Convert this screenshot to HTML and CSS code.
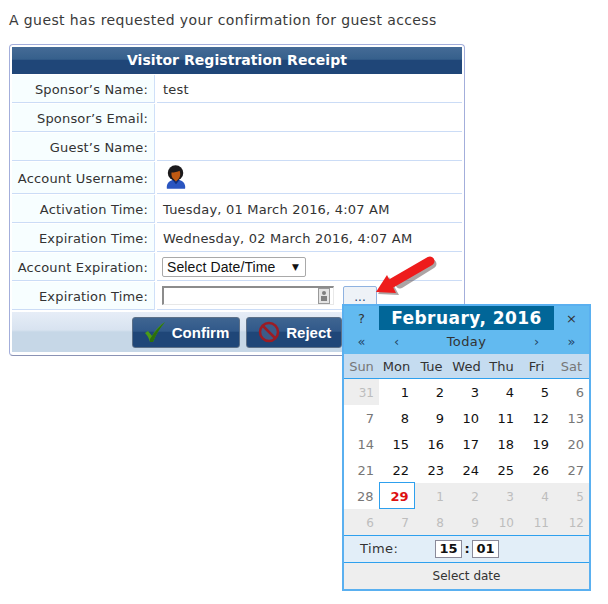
FILE: index.html
```html
<!DOCTYPE html>
<html lang="en">
<head>
    <meta charset="UTF-8">
    <link rel="stylesheet" href="styles.css">
    <title>Visitor Registration Receipt</title>
</head>
<body>
    <div class="page">
        <p class="intro">A guest has requested your confirmation for guest access</p>
        <div class="card">
            <div class="card-title">Visitor Registration Receipt</div>
            <div class="row"><label class="row-label">Sponsor’s Name:</label><div class="row-value">test</div></div>
            <div class="row"><label class="row-label">Sponsor’s Email:</label><div class="row-value"></div></div>
            <div class="row"><label class="row-label">Guest’s Name:</label><div class="row-value"></div></div>
            <div class="row row-tall">
                <label class="row-label">Account Username:</label>
                <div class="row-value">
                    <svg class="avatar" width="20" height="26" viewBox="0 0 22 26">
                        <path d="M1 26c-1-6 3-9 7-10h6c4 1 8 4 7 10z" fill="#2a55c0"/>
                        <path d="M7 16l4 5 4-5z" fill="#12307c"/>
                        <ellipse cx="10.500" cy="8.500" rx="8.500" ry="8.500" fill="#1c1a1c"/>
                        <path d="M6 8c3 0 7-1 9-2 1 3 1 6-1 9l-3 3-3-3c-2-2-2-4-2-7z" fill="#bf5a12"/>
                    </svg>
                </div>
            </div>
            <div class="row"><label class="row-label">Activation Time:</label><div class="row-value">Tuesday, 01 March 2016, 4:07 AM</div></div>
            <div class="row"><label class="row-label">Expiration Time:</label><div class="row-value">Wednesday, 02 March 2016, 4:07 AM</div></div>
            <div class="row">
                <label class="row-label">Account Expiration:</label>
                <div class="row-value row-control">
                    <div class="select-box">Select Date/Time<span class="select-arrow">▼</span></div>
                </div>
            </div>
            <div class="row">
                <label class="row-label">Expiration Time:</label>
                <div class="row-value row-control row-picker">
                    <div class="date-input">
                        <svg class="date-icon" width="12" height="16" viewBox="0 0 12 16">
                            <rect x="0.500" y="0.500" width="11" height="15" fill="#e4e4e4" stroke="#9a9a9a"/>
                            <circle cx="6" cy="5" r="2" fill="#808080"/>
                            <rect x="3" y="8" width="6" height="5" fill="#808080"/>
                        </svg>
                    </div>
                    <button class="pick-btn">...</button>
                </div>
            </div>
            <div class="card-footer">
                <button class="action-btn">
                    <svg width="24" height="22" viewBox="0 0 24 22">
                        <path d="M2 12l3-2 4 5C12 9 17 4 22 1 17 7 13 13 10 21H7C6 17 4 14 2 12z" fill="#4a9a18"/>
                        <path d="M7 18C12 10 17 5 22 1 17 7 13 13 10 21H7z" fill="#2c6f0c"/>
                    </svg>
                    Confirm
                </button>
                <button class="action-btn">
                    <svg width="24" height="24" viewBox="0 0 24 24">
                        <circle cx="12" cy="12" r="9" fill="#3c5c88" stroke="#9c1c24" stroke-width="2.500"/>
                        <path d="M5.500 5.500l13 13" stroke="#9c1c24" stroke-width="2.500"/>
                    </svg>
                    Reject
                </button>
            </div>
        </div>

        <svg class="arrow" width="66" height="46" viewBox="0 0 66 46">
            <path d="M54 8L22 28" stroke="#5a4a4a" stroke-opacity="0.500" stroke-width="9" stroke-linecap="round" transform="translate(2 2)"/>
            <path d="M0 38L11 21 21 39z" fill="#5a4a4a" fill-opacity="0.500" transform="translate(2 2)"/>
            <path d="M54 7L16 29" stroke="#ee1c1c" stroke-width="9" stroke-linecap="round"/>
            <path d="M0 38L11 21 20 39z" fill="#ee1c1c"/>
        </svg>

        <div class="calendar">
            <div class="cal-title">
                <span class="cal-side">?</span>
                <span class="cal-month">February, 2016</span>
                <span class="cal-side">×</span>
            </div>
            <div class="cal-nav">
                <span>«</span><span>‹</span><span class="cal-today">Today</span><span>›</span><span>»</span>
            </div>
            <table class="cal-grid">
                <thead>
                    <tr><th class="weekend">Sun</th><th>Mon</th><th>Tue</th><th>Wed</th><th>Thu</th><th>Fri</th><th class="weekend">Sat</th></tr>
                </thead>
                <tbody>
                    <tr><td class="other">31</td><td>1</td><td>2</td><td>3</td><td>4</td><td>5</td><td class="weekend">6</td></tr>
                    <tr><td class="weekend">7</td><td>8</td><td>9</td><td>10</td><td>11</td><td>12</td><td class="weekend">13</td></tr>
                    <tr><td class="weekend">14</td><td>15</td><td>16</td><td>17</td><td>18</td><td>19</td><td class="weekend">20</td></tr>
                    <tr><td class="weekend">21</td><td>22</td><td>23</td><td>24</td><td>25</td><td>26</td><td class="weekend">27</td></tr>
                    <tr><td class="weekend">28</td><td class="selected">29</td><td class="other">1</td><td class="other">2</td><td class="other">3</td><td class="other">4</td><td class="other">5</td></tr>
                    <tr><td class="other">6</td><td class="other">7</td><td class="other">8</td><td class="other">9</td><td class="other">10</td><td class="other">11</td><td class="other">12</td></tr>
                </tbody>
            </table>
            <div class="cal-time">
                <span class="time-label">Time:</span>
                <span class="time-box">15</span><span class="time-sep">:</span><span class="time-box">01</span>
            </div>
            <div class="cal-status">Select date</div>
        </div>
    </div>
</body>
</html>
```

FILE: styles.css
```css
body {
    margin: 0;
    padding: 0;
    background-color: #ffffff;
    font-family: "DejaVu Sans", sans-serif;
    font-size: 13px;
    color: #333333;
}
.page {
    position: relative;
    width: 608px;
    height: 604px;
    overflow: hidden;
    padding: 12px 0 0 9px;
    box-sizing: border-box;
}
.intro {
    margin: 0 0 15px 0;
    font-size: 14px;
    letter-spacing: 0.4px;
    line-height: 17px;
    color: #3a3a3a;
}

/* receipt card */
.card {
    width: 456px;
    height: 312px;
    box-sizing: border-box;
    padding: 2px;
    background-color: #ffffff;
    border: 1px solid #a3aedb;
    border-bottom-color: #8b93b5;
    border-radius: 4px;
}
.card-title {
    height: 27px;
    margin-bottom: 1px;
    background: linear-gradient(#456b96 0, #36608c 45%, #1f4678 50%, #1f4678 100%);
    color: #ffffff;
    font-weight: bold;
    font-size: 14px;
    letter-spacing: 0.05px;
    line-height: 26px;
    text-align: center;
}
.row {
    display: grid;
    grid-template-columns: 143px 305px;
    grid-template-rows: 100%;
    column-gap: 2px;
    height: 28px;
    margin-bottom: 1px;
}
.row-tall {
    height: 32px;
}
.row-label {
    display: flex;
    justify-content: flex-end;
    align-items: center;
    box-sizing: border-box;
    padding: 1px 6px 0 0;
    background-color: #f7feff;
    border-right: 1px solid #cfe0f8;
    border-bottom: 1px solid #cbdcf6;
    letter-spacing: 0.17px;
}
.row-value {
    display: flex;
    align-items: center;
    box-sizing: border-box;
    padding: 1px 0 0 6px;
    border-bottom: 1px solid #cbdcf6;
    letter-spacing: 0.2px;
}
.row-control {
    padding: 0 0 0 5px;
}
.avatar {
    margin: 0 0 2px 3px;
}
.select-box {
    display: flex;
    justify-content: space-between;
    align-items: center;
    width: 144px;
    height: 20px;
    box-sizing: border-box;
    padding: 0 6px 0 4px;
    border: 1px solid #a9a9a9;
    border-radius: 2px;
    font-family: "Liberation Sans", sans-serif;
    font-size: 14px;
    letter-spacing: 0.1px;
    color: #111111;
}
.select-arrow {
    font-family: "DejaVu Sans", sans-serif;
    font-size: 9px;
}
.row-picker {
    gap: 9px;
    align-items: flex-start;
    padding-top: 4px;
}
.date-input {
    display: flex;
    justify-content: flex-end;
    align-items: center;
    width: 172px;
    height: 19px;
    box-sizing: border-box;
    padding-right: 3px;
    border: 1px solid #e8e8e8;
    border-top: 2px solid #8c8c8c;
    border-left: 2px solid #8c8c8c;
}
.pick-btn {
    width: 34px;
    height: 22px;
    margin: 0;
    padding: 0;
    background-color: #eef2f7;
    border: 1px solid #8fb2e0;
    border-radius: 2px;
    font-family: "DejaVu Sans", sans-serif;
    font-size: 12px;
    color: #1f4678;
}
.card-footer {
    display: flex;
    justify-content: center;
    align-items: center;
    gap: 6px;
    height: 40px;
    margin-top: 2px;
    background: linear-gradient(#e6edf7 0, #d8e3f0 45%, #c6d7e7 50%, #c6d7e7 100%);
}
.action-btn {
    display: flex;
    align-items: center;
    justify-content: center;
    gap: 5px;
    height: 31px;
    padding: 0 10px;
    background: linear-gradient(#3f6591 0, #31598a 45%, #1f4678 50%, #1f4678 100%);
    border: 1px solid #5c7088;
    border-radius: 3px;
    font-family: "Liberation Sans", sans-serif;
    font-weight: bold;
    font-size: 15px;
    color: #ffffff;
}

/* red pointer over the picker button */
.arrow {
    position: absolute;
    left: 376px;
    top: 254px;
}

/* date picker popup */
.calendar {
    position: absolute;
    left: 342px;
    top: 304px;
    width: 249px;
    height: 287px;
    box-sizing: border-box;
    border: 2px solid #5ab0f0;
    background-color: #ffffff;
}
.cal-title {
    display: flex;
    height: 24px;
    background-color: #62baf0;
}
.cal-side {
    width: 35px;
    text-align: center;
    line-height: 25px;
    color: #333333;
}
.cal-month {
    width: 175px;
    background-color: #016698;
    color: #ffffff;
    font-weight: bold;
    font-size: 17px;
    letter-spacing: 0.45px;
    line-height: 25px;
    text-align: center;
}
.cal-nav {
    display: grid;
    grid-template-columns: 35px 35px 105px 35px 35px;
    height: 24px;
    background-color: #62baf0;
    line-height: 24px;
    text-align: center;
    color: #224466;
}
.cal-today {
    letter-spacing: 0.4px;
    color: #333333;
}
.cal-grid {
    width: 245px;
    table-layout: fixed;
    border-collapse: collapse;
    border-spacing: 0;
}
.cal-grid th {
    height: 24px;
    padding: 0;
    background-color: #c5dcf0;
    border-bottom: 1px solid #2ea0ee;
    font-weight: normal;
    text-align: center;
    color: #333333;
}
.cal-grid td {
    height: 26px;
    box-sizing: border-box;
    padding: 2px 5px 0 0;
    text-align: right;
    color: #111111;
}
.cal-grid th.weekend {
    color: #777777;
}
.cal-grid td.weekend {
    color: #777777;
}
.cal-grid td.other {
    background-color: #eeeeee;
    color: #bdbdbd;
    font-size: 12px;
}
.cal-grid td.selected {
    border: 1px solid #2ea0ee;
    color: #dd1111;
    font-weight: bold;
}
.cal-time {
    display: flex;
    align-items: center;
    height: 28px;
    box-sizing: border-box;
    background-color: #e2eef8;
    border-top: 1px solid #2ea0ee;
    border-bottom: 1px solid #2ea0ee;
}
.time-label {
    width: 91px;
    padding-left: 16px;
    box-sizing: border-box;
    letter-spacing: 0.4px;
    color: #333333;
}
.time-box {
    width: 27px;
    height: 18px;
    box-sizing: border-box;
    background-color: #ffffff;
    border: 1px solid #8a8a9a;
    font-weight: bold;
    line-height: 16px;
    text-align: center;
    color: #111111;
}
.time-sep {
    width: 10px;
    font-weight: bold;
    text-align: center;
    color: #111111;
}
.cal-status {
    height: 26px;
    background-color: #eeeeee;
    font-size: 12px;
    line-height: 26px;
    text-align: center;
    color: #333333;
}
```
